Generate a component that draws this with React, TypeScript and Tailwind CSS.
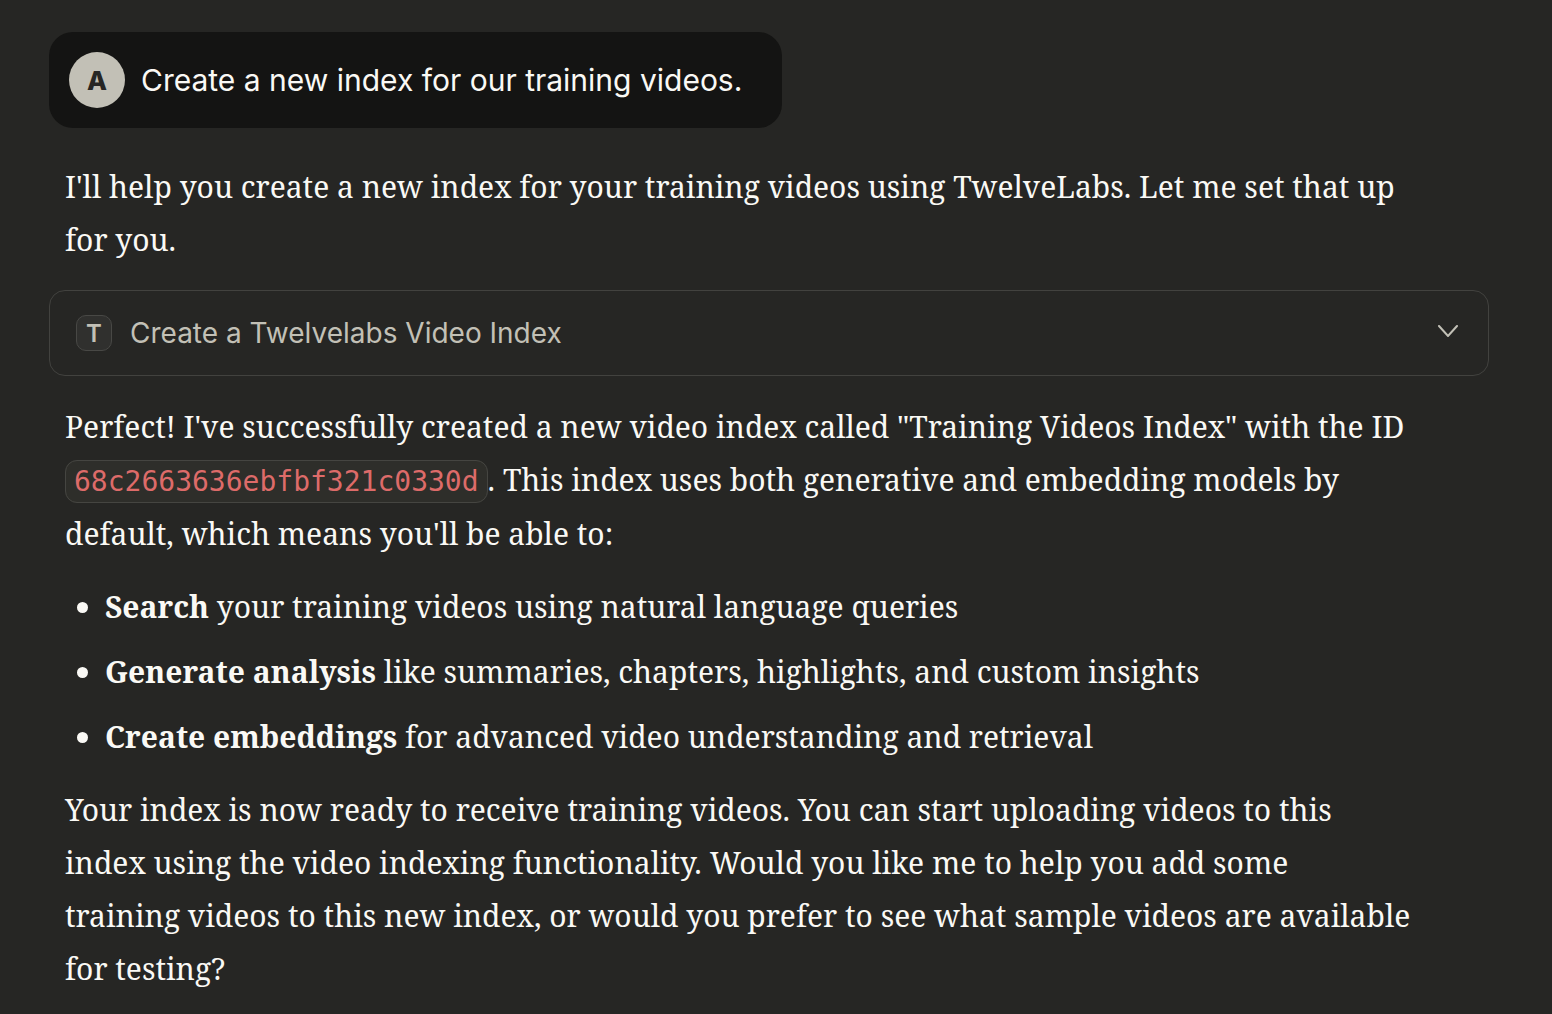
import { useState } from 'react';

const abilities = [
  { name: 'Search', detail: 'your training videos using natural language queries' },
  { name: 'Generate analysis', detail: 'like summaries, chapters, highlights, and custom insights' },
  { name: 'Create embeddings', detail: 'for advanced video understanding and retrieval' },
];

function UserMessage() {
  return (
    <div className="flex w-fit items-center gap-4 rounded-3xl bg-[#141413] py-5 pl-5 pr-10 font-['Inter','Liberation_Sans',sans-serif]">
      <span className="flex size-14 shrink-0 items-center justify-center rounded-full bg-[#c2c0b6] text-[26px] font-extrabold text-[#262624]">
        A
      </span>
      <p className="text-[30px] leading-10">Create a new index for our training videos.</p>
    </div>
  );
}

function ToolCall() {
  const [open, setOpen] = useState(false);

  return (
    <button
      type="button"
      aria-expanded={open}
      onClick={() => setOpen(!open)}
      className="mt-6 flex w-full items-center rounded-2xl border border-[#42423f] py-6 pl-[26px] pr-[29px] font-['Inter','Liberation_Sans',sans-serif] text-[#c2c0b6]"
    >
      <span className="flex size-9 items-center justify-center rounded-[10px] border border-[#484845] bg-[#30302e] text-[24px] font-semibold">
        T
      </span>
      <span className="ml-[18px] text-[28px] leading-9">Create a Twelvelabs Video Index</span>
      <svg className="mb-1 ml-auto h-3 w-[22px]" viewBox="0 0 22 12" fill="none" stroke="currentColor" strokeWidth="2" strokeLinecap="round" strokeLinejoin="miter">
        <path d="M2 1l9 10L20 1" />
      </svg>
    </button>
  );
}

function App() {
  return (
    <main className="min-h-screen bg-[#262624] py-8 pl-[49px] pr-[63px] font-['Noto_Serif','Liberation_Serif',serif] text-[30px] leading-[53px] text-[#faf9f5]">
      <UserMessage />
      <p className="mt-8 pl-4 pr-[72px]">
        I'll help you create a new index for your training videos using TwelveLabs. Let me set that up for you.
      </p>
      <ToolCall />
      <div className="mt-6 pl-4 pr-[72px]">
        <p>
          Perfect! I've successfully created a new video index called "Training Videos Index" with the ID{' '}
          <code className="rounded-xl border border-[#454541] bg-[#2e2e2a] px-2 py-1 font-['DejaVu_Sans_Mono',monospace] text-[28px] leading-[50px] text-[#dd6b69]">
            68c2663636ebfbf321c0330d
          </code>
          . This index uses both generative and embedding models by default, which means you'll be able to:
        </p>
        <ul className="my-5 list-disc space-y-3 pl-10">
          {abilities.map((ability) => (
            <li key={ability.name}>
              <strong>{ability.name}</strong> {ability.detail}
            </li>
          ))}
        </ul>
        <p>
          Your index is now ready to receive training videos. You can start uploading videos to this index using the
          video indexing functionality. Would you like me to help you add some
          <br />
          training videos to this new index, or would you prefer to see what sample videos are available for testing?
        </p>
      </div>
    </main>
  );
}

export default App;
